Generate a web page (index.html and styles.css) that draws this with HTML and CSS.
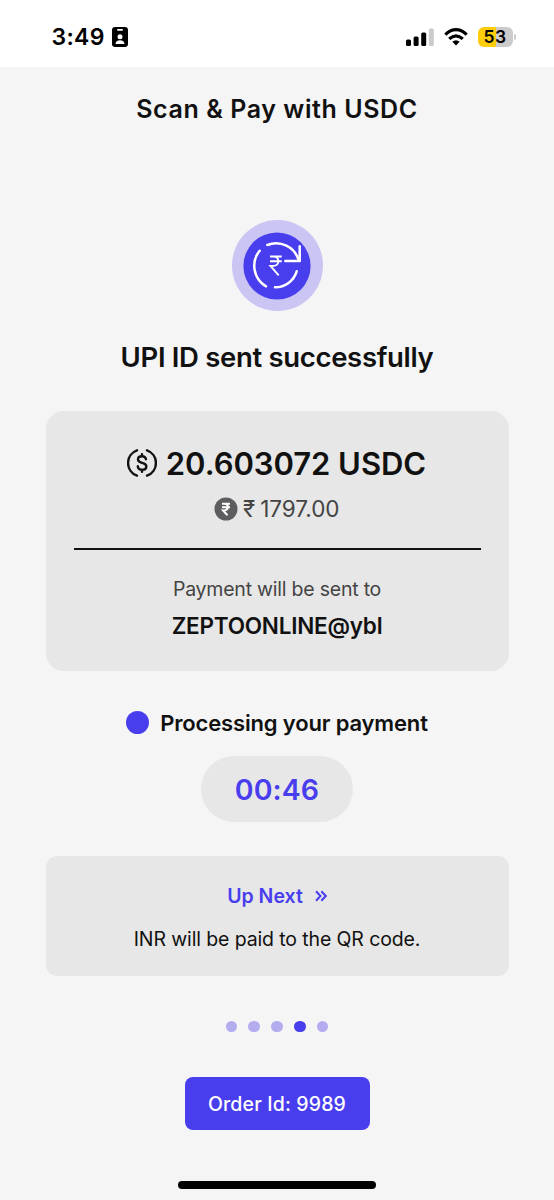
FILE: index.html
```
<!DOCTYPE html>
<html lang="en">
<head>
<meta charset="utf-8">
<title>Scan &amp; Pay with USDC</title>
<link rel="stylesheet" href="styles.css">
</head>
<body>
<div class="screen">
  <div class="status-bar">
    <div class="status-left">
      <span class="clock">3:49</span>
      <svg class="id-badge" viewBox="0 0 16 20"><rect width="16" height="20" rx="3.2"/><rect x="5" y="2.1" width="6" height="1.6" rx=".8" fill="#fff"/><circle cx="8" cy="9.7" r="2.5" fill="#fff"/><path d="M3.5 17c.2-2.500 1.800-3.700 4.500-3.700s4.300 1.200 4.500 3.700z" fill="#fff"/></svg>
    </div>
    <div class="status-right">
      <svg class="signal" viewBox="0 0 28 19"><rect y="11.500" width="5" height="6.500" rx="1.500"/><rect x="7.600" y="8.500" width="5" height="9.500" rx="1.500"/><rect x="15.200" y="4.500" width="5" height="13.500" rx="1.500"/><rect x="22.800" y="0.500" width="5" height="17.500" rx="1.500" fill="#cbcbcb"/></svg>
      <svg class="wifi" viewBox="0 0 24 18"><g fill="none" stroke="#000" stroke-width="3.200"><path d="M1.300 6.600Q12-3.200 22.700 6.600"/><path d="M5.200 10.900Q12 4.800 18.800 10.900"/></g><path d="M12 17.500 8.300 13.700Q12 10.700 15.700 13.700z"/></svg>
      <div class="battery"><span class="battery-level">53</span><i class="battery-cap"></i></div>
    </div>
  </div>

  <h1 class="page-title">Scan &amp; Pay with USDC</h1>

  <div class="hero-ring">
    <svg class="hero-icon" viewBox="0 0 68 68"><circle cx="34" cy="34" r="33.600" fill="#493eee"/><g fill="none" stroke="#fff" stroke-width="2.500" stroke-linecap="round" stroke-linejoin="round"><path d="M16.700 18.700A23.800 23.800 0 0 0 23 54.300"/><path d="M24.300 13A23.500 23.500 0 0 1 55.700 28.300"/><path d="M56.700 14.300V29H42.300"/><path d="M53.700 39.300A22.500 22.500 0 0 1 32 55.300"/></g><path d="M27 24.500H38.700M27 29.300H38.700M27 24.500h3.500c6.500 0 6.500 9.400 0 9.400h-3L35.700 43.300" fill="none" stroke="#fff" stroke-width="1.900"/></svg>
  </div>

  <h2 class="headline">UPI ID sent successfully</h2>

  <section class="payment-card">
    <div class="amount-row">
      <svg class="coin" viewBox="0 0 30 30"><g fill="none" stroke="#111" stroke-width="2.400" stroke-linecap="round"><path d="M10 2.300A13.500 13.500 0 0 0 10 27.700M20 2.300A13.500 13.500 0 0 1 20 27.700"/><path d="M19 11.200C18.500 9 17 8.300 15 8.300c-2.300 0-4 1.100-4 3.100 0 4.800 8.300 2.200 8.300 7 0 2-1.700 3.300-4.200 3.300-2.600 0-4.100-1.200-4.300-3.400M15 6.200v2.100M15 21.700v2.100"/></g></svg>
      <span class="amount">20.603072 USDC</span>
    </div>
    <div class="inr-row">
      <svg class="rupee-coin" viewBox="0 0 24 24"><circle cx="12" cy="12" r="11.500" fill="#5d5d60"/><path d="M8 6.800h8M8 10.300h8M8 6.800h2.500c4.500 0 4.500 6.600 0 6.600H9L13.500 18.300" fill="none" stroke="#fff" stroke-width="2"/></svg>
      <span class="rupee">₹</span>
      <span>1797.00</span>
    </div>
    <div class="divider"></div>
    <div class="recipient-label">Payment will be sent to</div>
    <div class="recipient">ZEPTOONLINE@ybl</div>
  </section>

  <div class="progress-row"><i class="progress-dot"></i><span>Processing your payment</span></div>
  <div class="timer">00:46</div>

  <section class="next-card">
    <div class="next-title"><span>Up Next</span><svg class="chevrons" viewBox="0 0 12 12"><path d="M1 1.200 5.500 6 1 10.800M6.300 1.200 10.800 6 6.300 10.800" fill="none" stroke="#493eee" stroke-width="2"/></svg></div>
    <div class="next-text">INR will be paid to the QR code.</div>
  </section>

  <div class="pager"><i></i><i></i><i></i><i class="active"></i><i></i></div>
  <div class="order-button">Order Id: 9989</div>
  <div class="home-indicator"></div>
</div>
</body>
</html>
```
FILE: styles.css
```
* { box-sizing: border-box; }
body { margin: 0; background: #f5f5f5; color: #111; font-family: Inter, "Noto Sans", sans-serif; font-weight: 600; }
h1, h2 { margin: 0; font-weight: 600; }
.screen { width: 554px; height: 1200px; display: flex; flex-direction: column; align-items: center; overflow: hidden; white-space: nowrap; }
.status-bar { flex: none; width: 100%; height: 67px; background: #fff; display: flex; justify-content: space-between; padding: 0 38.5px 0 51.5px; color: #000; }
.status-left, .status-right { display: flex; align-items: center; height: 74px; }
.clock { font-size: 23px; letter-spacing: .3px; }
.id-badge { width: 16px; height: 20px; margin-left: 7.5px; }
.signal { width: 28px; height: 19px; margin-right: 10px; }
.wifi { width: 24px; height: 18px; margin-right: 10px; }
.battery { display: flex; align-items: center; gap: 1px; }
.battery-level { width: 35px; height: 20px; border-radius: 6px; background: linear-gradient(90deg, #fdcd0b 52%, #cbcbcb 52%); font-size: 17.5px; line-height: 20px; letter-spacing: .5px; text-align: center; }
.battery-cap { width: 2px; height: 6px; border-radius: 0 2px 2px 0; background: #cbcbcb; }
.page-title { font-size: 25px; line-height: 32px; margin-top: 26px; letter-spacing: .58px; }
.hero-ring { width: 91px; height: 91px; border-radius: 50%; background: #cac5f3; display: flex; align-items: center; justify-content: center; margin-top: 95.4px; flex: none; }
.hero-icon { width: 68px; height: 68px; }
.headline { font-size: 27.5px; line-height: 36px; margin-top: 27.6px; letter-spacing: -.32px; }
.payment-card { width: 463px; height: 260px; margin-top: 36px; padding: 32px 28px 0; border-radius: 18px; background: #e7e7e7; display: flex; flex-direction: column; align-items: center; flex: none; }
.amount-row { height: 41px; display: flex; align-items: center; gap: 9px; margin-left: -1px; }
.coin { width: 30px; height: 30px; }
.amount { font-size: 31px; letter-spacing: -.05px; }
.inr-row { height: 30px; margin-top: 10px; display: flex; align-items: center; color: #444; font-weight: 400; font-size: 22.5px; }
.rupee-coin { width: 24px; height: 24px; margin-right: 4.5px; }
.rupee { margin-right: 5px; }
.divider { width: 100%; height: 2px; background: #111; margin-top: 24px; }
.recipient-label { font-size: 19.5px; line-height: 28px; margin-top: 25px; font-weight: 400; color: #444; letter-spacing: -.22px; }
.recipient { font-size: 22.5px; line-height: 30px; margin-top: 8px; letter-spacing: -.22px; }
.progress-row { height: 30px; margin-top: 37px; display: flex; align-items: center; gap: 11px; font-size: 22px; letter-spacing: -.16px; }
.progress-dot { width: 23px; height: 23px; border-radius: 50%; background: #493eee; }
.timer { width: 152px; height: 66px; margin-top: 18px; border-radius: 33px; background: #e7e7e7; color: #493eee; font-size: 28.5px; line-height: 68px; text-align: center; flex: none; letter-spacing: .1px; }
.next-card { width: 463px; height: 120px; margin-top: 34px; padding-top: 25px; border-radius: 11px; background: #e7e7e7; display: flex; flex-direction: column; align-items: center; flex: none; }
.next-title { height: 30px; display: flex; align-items: center; gap: 12px; color: #493eee; font-size: 19.5px; }
.chevrons { width: 12px; height: 12px; }
.next-text { font-size: 19.5px; line-height: 30px; margin-top: 13px; font-weight: 400; letter-spacing: -.12px; }
.pager { display: flex; gap: 11px; margin-top: 44.6px; }
.pager i { width: 11.7px; height: 11.7px; border-radius: 50%; background: #b3adf0; }
.pager .active { background: #493eee; }
.order-button { width: 185px; height: 53px; margin-top: 44.7px; border-radius: 8px; background: #493eee; color: #fff; font-size: 19.5px; line-height: 55px; text-align: center; flex: none; font-weight: 500; letter-spacing: .15px; }
.home-indicator { width: 198px; height: 8px; border-radius: 4px; background: #000; margin-top: 51px; flex: none; }
```
